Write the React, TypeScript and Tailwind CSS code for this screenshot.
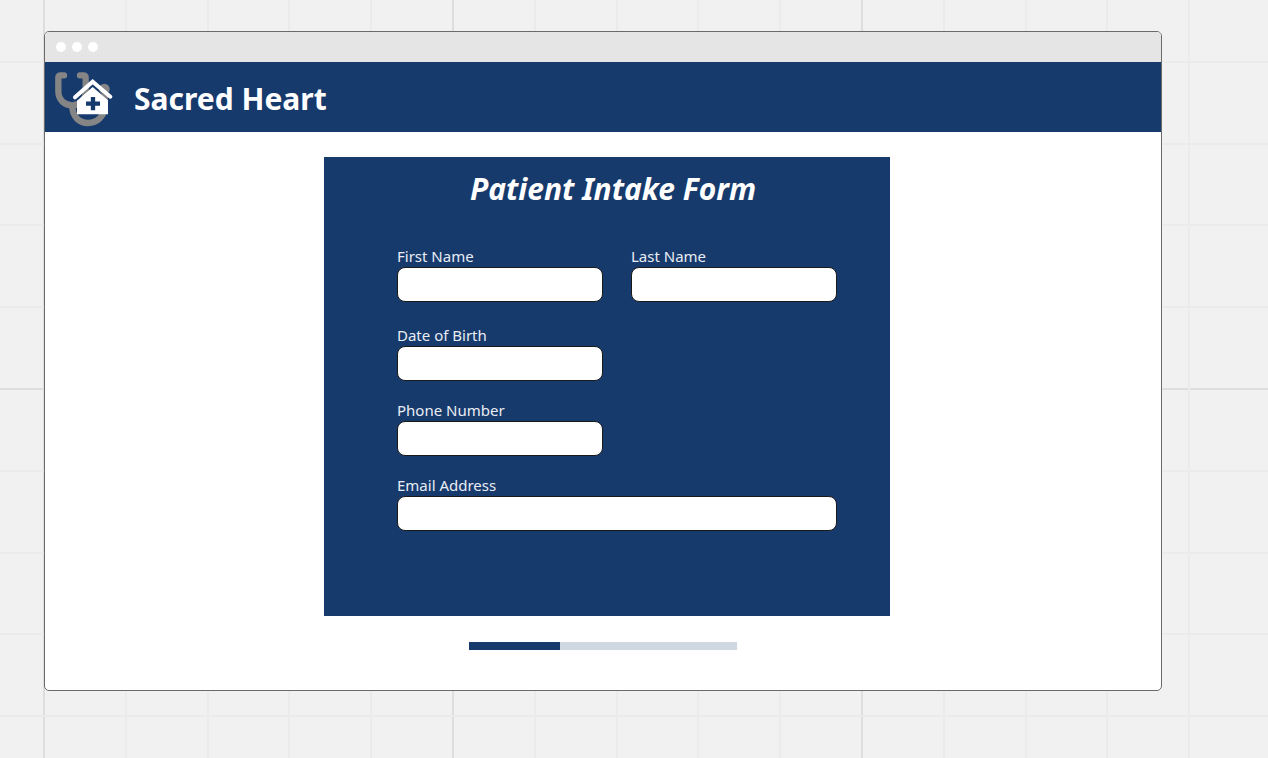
import React from "react";

const MINOR_STEPS = [82, 164, 245, 327];

function CanvasGrid() {
  return (
    <svg className="absolute inset-0 h-full w-full" aria-hidden="true">
      <defs>
        <pattern id="grid" x="43" y="-21" width="409" height="409" patternUnits="userSpaceOnUse">
          <rect x="0" y="0" width="2" height="409" fill="#dedede" />
          <rect x="0" y="0" width="409" height="2" fill="#dedede" />
          {MINOR_STEPS.map((step) => (
            <g key={step} fill="#ebebeb">
              <rect x={step} y="0" width="2" height="409" />
              <rect x="0" y={step} width="409" height="2" />
            </g>
          ))}
        </pattern>
      </defs>
      <rect width="100%" height="100%" fill="url(#grid)" />
    </svg>
  );
}

function Logo() {
  return (
    <svg viewBox="54 114 180 210" className="h-[70px] w-[60px] shrink-0" aria-hidden="true">
      <g fill="none" stroke="#858585" strokeWidth="19" strokeLinecap="round" strokeLinejoin="round">
        <path d="M84 154H74Q67 154 67 161V202C67 228 86 244 109 244C132 244 149 228 149 202V161Q149 154 142 154H132" />
        <path d="M109 246C109 276 128 297 156 297C184 297 206 276 206 246V200" />
      </g>
      <circle cx="205" cy="195" r="16" fill="#858585" />
      <path d="M123 271V230L170 189L216 229V271Z" fill="#ffffff" />
      <path d="M117 220L170 173L223 218" fill="none" stroke="#ffffff" strokeWidth="12" strokeLinecap="round" />
      <path d="M171 219V259M150 239H192" fill="none" stroke="#173a6d" strokeWidth="13" />
    </svg>
  );
}

function Field({
  id,
  label,
  type = "text",
  className = "",
}: {
  id: string;
  label: string;
  type?: string;
  className?: string;
}) {
  return (
    <div className={`flex flex-col ${className}`}>
      <label htmlFor={id} className="mb-0.5 text-[15px] leading-[18px] text-[#e9edf3]">
        {label}
      </label>
      <input
        id={id}
        name={id}
        type={type}
        className="h-[35px] w-full rounded-lg border border-[#1a1a1a] bg-white px-2 text-[15px] text-[#1a1a1a]"
      />
    </div>
  );
}

export default function App() {
  return (
    <div className="relative min-h-screen bg-[#f1f1f1] pt-[31px] pr-[106px] pb-16 pl-11 font-['Noto_Sans',sans-serif]">
      <CanvasGrid />
      <div className="relative overflow-hidden rounded-[5px] border border-[#6b6b6b] bg-white">
        <div className="flex h-[30px] items-center gap-[6px] bg-[#e5e5e5] pl-[11px]">
          <span className="size-[10px] rounded-full bg-white" />
          <span className="size-[10px] rounded-full bg-white" />
          <span className="size-[10px] rounded-full bg-white" />
        </div>

        <header className="flex h-[70px] items-center gap-5 bg-[#173a6d] pl-[9px]">
          <Logo />
          <span className="pt-[3px] text-[30px] leading-10 font-bold text-white">Sacred Heart</span>
        </header>

        <main className="flex flex-col items-center pt-[25px] pb-10">
          <div className="flex w-full justify-center pl-2">
            <form className="w-full max-w-[566px] bg-[#173a6d] pt-3 pr-[53px] pb-[85px] pl-[73px]">
              <h1 className="pr-2 text-center text-[30px] leading-10 font-bold text-white italic">
                Patient Intake Form
              </h1>
              <div className="mt-[38px] grid grid-cols-2 gap-x-7 gap-y-5">
                <Field id="first-name" label="First Name" className="mb-1" />
                <Field id="last-name" label="Last Name" className="mb-1" />
                <Field id="date-of-birth" label="Date of Birth" className="col-start-1" />
                <Field id="phone-number" label="Phone Number" type="tel" className="col-start-1" />
                <Field id="email-address" label="Email Address" type="email" className="col-span-2" />
              </div>
            </form>
          </div>

          <div
            role="progressbar"
            aria-label="Form progress"
            aria-valuenow={34}
            aria-valuemin={0}
            aria-valuemax={100}
            className="mt-[26px] h-2 w-[268px] bg-[#cfd8e2]"
          >
            <div className="h-full bg-[#173a6d]" style={{ width: "34%" }} />
          </div>
        </main>
      </div>
    </div>
  );
}
